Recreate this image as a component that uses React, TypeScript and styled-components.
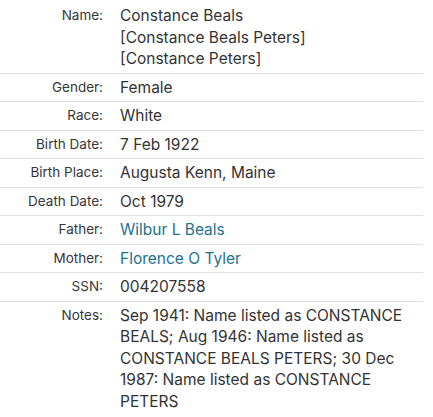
import React from "react";
import styled, { createGlobalStyle } from "styled-components";

const Global = createGlobalStyle`
  html, body { margin: 0; padding: 0; background: #fff; }
  body { font-family: Inter, "Noto Sans", Arial, sans-serif; -webkit-font-smoothing: antialiased; }
`;

const Table = styled.div`
  width: 423px;
  padding-top: 2px;
  display: flex;
  flex-direction: column;
`;

const Row = styled.div<{ $last?: boolean }>`
  display: grid;
  grid-template-columns: 103px 1fr;
  column-gap: 17px;
  padding: 3px 0 3px;
  border-bottom: ${(p) => (p.$last ? "none" : "1px solid #e2e2e2")};
`;

const Label = styled.div`
  text-align: right;
  font-size: 13.5px;
  line-height: 21.5px;
  color: #363636;
`;

const Value = styled.div`
  font-size: 15.5px;
  line-height: 21.5px;
  color: #333;
  padding-right: 8px;
`;

const Link = styled.a`
  color: #21718f;
  text-decoration: none;
`;

const rows: { label: string; value: React.ReactNode }[] = [
  {
    label: "Name:",
    value: (
      <>
        Constance Beals
        <br />
        [Constance Beals Peters]
        <br />
        [Constance Peters]
      </>
    ),
  },
  { label: "Gender:", value: "Female" },
  { label: "Race:", value: "White" },
  { label: "Birth Date:", value: "7 Feb 1922" },
  { label: "Birth Place:", value: "Augusta Kenn, Maine" },
  { label: "Death Date:", value: "Oct 1979" },
  { label: "Father:", value: <Link href="#">Wilbur L Beals</Link> },
  { label: "Mother:", value: <Link href="#">Florence O Tyler</Link> },
  { label: "SSN:", value: "004207558" },
  {
    label: "Notes:",
    value:
      "Sep 1941: Name listed as CONSTANCE BEALS; Aug 1946: Name listed as CONSTANCE BEALS PETERS; 30 Dec 1987: Name listed as CONSTANCE PETERS",
  },
];

export default function App() {
  return (
    <>
      <Global />
      <Table>
        {rows.map((r, i) => (
          <Row key={r.label} $last={i === rows.length - 1}>
            <Label>{r.label}</Label>
            <Value>{r.value}</Value>
          </Row>
        ))}
      </Table>
    </>
  );
}
